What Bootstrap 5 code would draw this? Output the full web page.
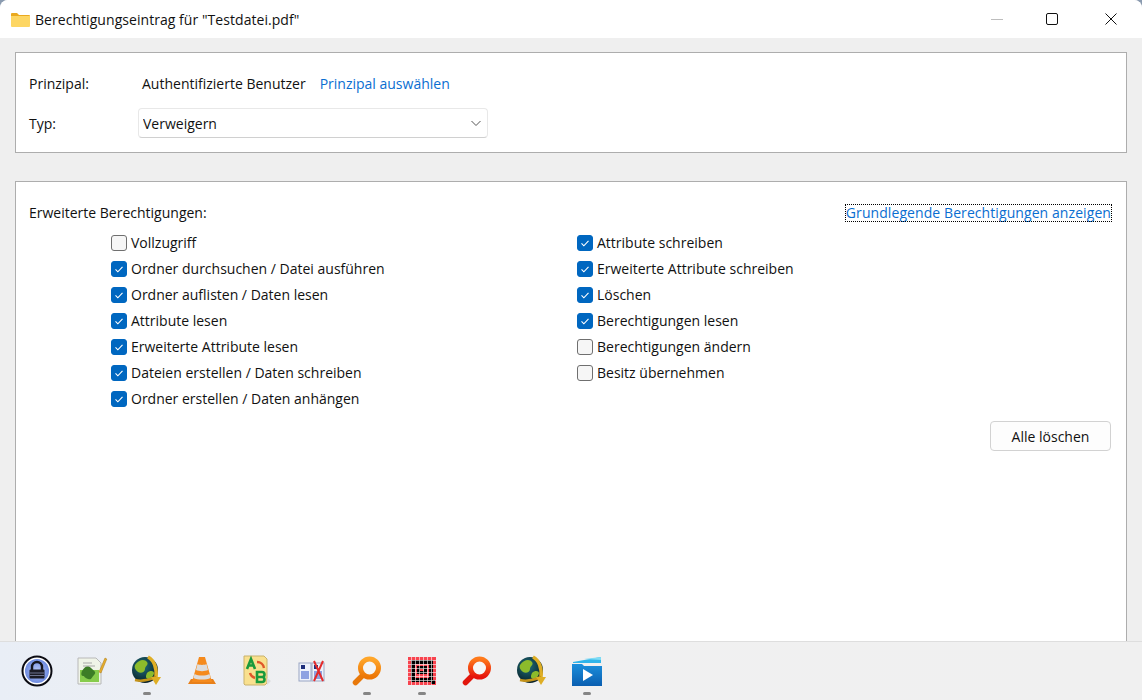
<!DOCTYPE html>
<html lang="de">
<head>
    <meta charset="UTF-8">
    <title>Berechtigungseintrag</title>
    <link rel="stylesheet" href="https://cdn.jsdelivr.net/npm/bootstrap@5.3.3/dist/css/bootstrap.min.css">
    <style>
        html, body { height: 700px; overflow: hidden; }
        body { background: #8a9bb0; font-family: "Open Sans", "Liberation Sans", sans-serif; font-size: 14px; color: #111; }
        .app-window { height: 641px; background: #efefef; border-radius: 8px 8px 0 0; overflow: hidden; }
        .title-bar { height: 38px; background: #fff; padding-left: 11px; }
        .title-text { margin-left: 5px; font-size: 14px; letter-spacing: .05px; }
        .win-btn { width: 55px; height: 38px; }
        .win-btn-last { width: 63px; }
        .dlg-panel { background: #fff; border: 1px solid #adadad; margin: 0 15px; }
        .panel-top { height: 101px; margin-top: 14px; padding: 20px 14px 0 13px; }
        .panel-main { flex: 1 1 auto; margin-top: 28px; margin-bottom: -2px; padding: 20px 14px 0 13px; }
        .lbl-col { width: 109px; }
        .form-row-a { height: 20px; }
        .form-row-b { margin-top: 15px; height: 30px; }
        .sys-link { color: #0a6ed1; text-decoration: none; }
        .pick-link { margin-left: 14px; }
        .type-select {
            --bs-form-select-bg-img: url("data:image/svg+xml,%3csvg xmlns='http://www.w3.org/2000/svg' viewBox='0 0 12 12'%3e%3cpath fill='none' stroke='%23555' d='M1.500 4l4.500 4.500L10.500 4'/%3e%3c/svg%3e");
            width: 350px; height: 30px; padding: 0 30px 0 4px; font-size: 14px; color: #111;
            border: 1px solid #e8e8e8; border-bottom-color: #d0d0d0; border-radius: 4px;
            background-position: right 5px center; background-size: 12px 12px;
        }
        .focus-link { outline: 1px dotted #000; line-height: 16px; letter-spacing: .08px; margin-right: 1px; }
        .perm-cols { padding-left: 82px; margin-top: 7px; }
        .perm-col { width: 466px; }
        .perm-item { height: 26px; margin: 0; padding: 0; display: flex; align-items: center; }
        .perm-item .form-check-input { width: 16px; height: 16px; margin: 0 4px 0 0; float: none; border: 1px solid #6f6f6f; border-radius: 3px; background-color: #f6f6f6; flex: none; }
        .perm-item .form-check-input:checked[type=checkbox] {
            --bs-form-check-bg-image: url("data:image/svg+xml,%3csvg xmlns='http://www.w3.org/2000/svg' viewBox='0 0 16 16'%3e%3cpath fill='none' stroke='%23fff' stroke-width='1.300' d='M4 8.500l2.700 2.700L12 5.500'/%3e%3c/svg%3e");
            background-color: #0067c0; border-color: #0067c0;
        }
        .perm-item .form-check-label { line-height: 20px; }
        .clear-btn { width: 121px; height: 30px; padding: 0; font-size: 14px; color: #111; background: #fdfdfd; border: 1px solid #d2d2d2; border-radius: 4px; margin-right: 1px; margin-top: 1px; }
        .task-bar { height: 59px; background: linear-gradient(90deg, #e9eef6, #f0f0f1 30%, #f0f0f0); border-top: 1px solid #dedede; padding-left: 9px; }
        .task-slot { width: 55px; height: 58px; padding-top: 13px; }
        .task-slot svg { display: block; }
        .run-dot { width: 8px; height: 3px; border-radius: 2px; background: #858585; margin-top: 5px; }
        .run-none { background: transparent; }
    </style>
</head>
<body>
    <!-- Dialogfenster -->
    <div class="app-window d-flex flex-column">
        <div class="title-bar d-flex align-items-center flex-shrink-0">
            <svg width="19" height="15" viewBox="0 0 19 15"><path d="M0 2a1 1 0 0 1 1-1h5l2 2h10a1 1 0 0 1 1 1v1H0z" fill="#eaa91f"/><path d="M0 4h19v10a1 1 0 0 1-1 1H1a1 1 0 0 1-1-1z" fill="#fdd663"/></svg>
            <span class="title-text flex-grow-1">Berechtigungseintrag für "Testdatei.pdf"</span>
            <div class="win-btn d-flex align-items-center justify-content-center"><svg width="12" height="12"><path d="M0 6.500h12" stroke="#bdbdbd"/></svg></div>
            <div class="win-btn d-flex align-items-center justify-content-center"><svg width="12" height="12"><rect x=".5" y=".5" width="11" height="11" rx="1.500" fill="none" stroke="#111"/></svg></div>
            <div class="win-btn win-btn-last d-flex align-items-center justify-content-center"><svg width="12" height="12"><path d="M.5.5l11 11M11.500.5l-11 11" stroke="#111"/></svg></div>
        </div>

        <div class="dlg-panel panel-top flex-shrink-0">
            <div class="form-row-a d-flex align-items-center">
                <span class="lbl-col flex-shrink-0">Prinzipal:</span>
                <span class="ms-1">Authentifizierte Benutzer</span>
                <a href="#" class="sys-link pick-link">Prinzipal auswählen</a>
            </div>
            <div class="form-row-b d-flex align-items-center">
                <span class="lbl-col flex-shrink-0">Typ:</span>
                <select class="form-select type-select">
                    <option>Verweigern</option>
                </select>
            </div>
        </div>

        <div class="dlg-panel panel-main">
            <div class="d-flex justify-content-between align-items-center">
                <span>Erweiterte Berechtigungen:</span>
                <a href="#" class="sys-link focus-link">Grundlegende Berechtigungen anzeigen</a>
            </div>
            <div class="perm-cols d-flex">
                <div class="perm-col">
                    <div class="form-check perm-item"><input class="form-check-input" type="checkbox" id="p1"><label class="form-check-label" for="p1">Vollzugriff</label></div>
                    <div class="form-check perm-item"><input class="form-check-input" type="checkbox" id="p2" checked><label class="form-check-label" for="p2">Ordner durchsuchen / Datei ausführen</label></div>
                    <div class="form-check perm-item"><input class="form-check-input" type="checkbox" id="p3" checked><label class="form-check-label" for="p3">Ordner auflisten / Daten lesen</label></div>
                    <div class="form-check perm-item"><input class="form-check-input" type="checkbox" id="p4" checked><label class="form-check-label" for="p4">Attribute lesen</label></div>
                    <div class="form-check perm-item"><input class="form-check-input" type="checkbox" id="p5" checked><label class="form-check-label" for="p5">Erweiterte Attribute lesen</label></div>
                    <div class="form-check perm-item"><input class="form-check-input" type="checkbox" id="p6" checked><label class="form-check-label" for="p6">Dateien erstellen / Daten schreiben</label></div>
                    <div class="form-check perm-item"><input class="form-check-input" type="checkbox" id="p7" checked><label class="form-check-label" for="p7">Ordner erstellen / Daten anhängen</label></div>
                </div>
                <div class="perm-col">
                    <div class="form-check perm-item"><input class="form-check-input" type="checkbox" id="p8" checked><label class="form-check-label" for="p8">Attribute schreiben</label></div>
                    <div class="form-check perm-item"><input class="form-check-input" type="checkbox" id="p9" checked><label class="form-check-label" for="p9">Erweiterte Attribute schreiben</label></div>
                    <div class="form-check perm-item"><input class="form-check-input" type="checkbox" id="p10" checked><label class="form-check-label" for="p10">Löschen</label></div>
                    <div class="form-check perm-item"><input class="form-check-input" type="checkbox" id="p11" checked><label class="form-check-label" for="p11">Berechtigungen lesen</label></div>
                    <div class="form-check perm-item"><input class="form-check-input" type="checkbox" id="p12"><label class="form-check-label" for="p12">Berechtigungen ändern</label></div>
                    <div class="form-check perm-item"><input class="form-check-input" type="checkbox" id="p13"><label class="form-check-label" for="p13">Besitz übernehmen</label></div>
                </div>
            </div>
            <div class="d-flex justify-content-end mt-2">
                <button type="button" class="btn clear-btn">Alle löschen</button>
            </div>
        </div>
    </div>

    <!-- Taskleiste -->
    <div class="task-bar d-flex">
        <!-- Verläufe für die Symbole -->
        <svg width="0" height="0" class="position-absolute">
            <defs>
                <radialGradient id="gradLock" cx=".5" cy=".5" r=".6"><stop offset="0" stop-color="#b8c8f5"/><stop offset="1" stop-color="#5f7fdc"/></radialGradient>
                <radialGradient id="gradGlobe" cx=".4" cy=".35" r=".7"><stop offset="0" stop-color="#1f6f7c"/><stop offset="1" stop-color="#061a22"/></radialGradient>
                <linearGradient id="gradOrange" x1="0" y1="0" x2="0" y2="1"><stop offset="0" stop-color="#ffa62a"/><stop offset="1" stop-color="#ec7606"/></linearGradient>
                <linearGradient id="gradRed" x1="0" y1="0" x2="0" y2="1"><stop offset="0" stop-color="#ff7a1a"/><stop offset="1" stop-color="#e6140c"/></linearGradient>
                <linearGradient id="gradFolder" x1="0" y1="0" x2="0" y2="1"><stop offset="0" stop-color="#1b8fdc"/><stop offset="1" stop-color="#0a5eb0"/></linearGradient>
            </defs>
        </svg>
        <div class="task-slot d-flex flex-column align-items-center">
            <svg width="32" height="32" viewBox="0 0 32 32"><circle cx="16" cy="16" r="14.500" fill="#fff" stroke="#0b0b12" stroke-width="2"/><circle cx="16" cy="16" r="12" fill="url(#gradLock)"/><path d="M11 15v-3a5 5 0 0 1 10 0v3" fill="none" stroke="#16161e" stroke-width="2.400"/><rect x="8.500" y="14.500" width="15" height="9" rx="1" fill="#1b1b25"/><path d="M9 18h14M9 20.500h14" stroke="#6c7390"/></svg>
            <span class="run-dot run-none"></span>
        </div>
        <div class="task-slot d-flex flex-column align-items-center">
            <svg width="32" height="32" viewBox="0 0 32 32"><path d="M2 3h18l5 5v21H2z" fill="#f0f4e8" stroke="#b8b8b8"/><path d="M4 15h19v12H4z" fill="#86cc4c"/><path d="M6 16c3-5 6-6 9-3s6 4 3 7-2 5-6 4-3-3-5-3-2-3-1-5z" fill="#3c7d26"/><path d="M7 8h9M7 11h12" stroke="#a8a8a8"/><path d="M23 17 29 3l1.800 1L25 18z" fill="#e6ad2c" stroke="#a87612" stroke-width=".5"/></svg>
            <span class="run-dot run-none"></span>
        </div>
        <div class="task-slot d-flex flex-column align-items-center">
            <svg width="32" height="32" viewBox="0 0 32 32"><circle cx="14" cy="15" r="13" fill="url(#gradGlobe)"/><path d="M4 10c4-6 10-6 12-3s-2 4-2 7-4 5-7 3-4-5-3-7zM16 18c3-3 7-2 7 0s-3 7-6 6-2-4-1-6z" fill="#8cbb2b"/><path d="M17 2c6 3 9 11 8 20" fill="none" stroke="#dfae25" stroke-width="3.500"/><path d="M4 25c8 2 14 0 21-3" fill="none" stroke="#c4931a" stroke-width="2.500"/><path d="M20 22h10l-5 8z" fill="#dfae25"/></svg>
            <span class="run-dot"></span>
        </div>
        <div class="task-slot d-flex flex-column align-items-center">
            <svg width="32" height="32" viewBox="0 0 32 32"><path d="M5 24h22l3 5H2z" fill="#e8801a"/><path d="M13 2h6l7 25H6z" fill="#f58a1c"/><path d="M11.500 9c2 1.200 7 1.200 9 0l1.500 6c-3 1.500-9 1.500-12 0zM8.500 19c4 2 11 2 15 0l1 4c-4 2-13 2-17 0z" fill="#ddd"/></svg>
            <span class="run-dot run-none"></span>
        </div>
        <div class="task-slot d-flex flex-column align-items-center">
            <svg width="32" height="32" viewBox="0 0 32 32"><path d="M3 1h20l3 3v24l-2 2H4l-1-1z" fill="#f9e08e" stroke="#c9b26d"/><path d="M26 23l4 3-4 4z" fill="#ddd"/><path d="M6 14 10 4l4 10M7.500 10.500h5" fill="none" stroke="#1b9a3c" stroke-width="2.600"/><path d="M16 17h5a2.500 2.500 0 0 1 0 5h-5zM16 22h5a2.500 2.500 0 0 1 0 5h-5z" fill="none" stroke="#1b9a3c" stroke-width="2.600"/><path d="M16 7a7 7 0 0 1 7 6M9 18a7 7 0 0 0 5 5" fill="none" stroke="#e0562a" stroke-width="2.400"/></svg>
            <span class="run-dot run-none"></span>
        </div>
        <div class="task-slot d-flex flex-column align-items-center">
            <svg width="32" height="32" viewBox="0 0 32 32"><rect x="3" y="8" width="12" height="18" fill="#eef2fb" stroke="#9aa6c4"/><rect x="16" y="8" width="12" height="18" fill="#eef2fb" stroke="#9aa6c4"/><path d="M5 10h4v4H5zM18 10h4v4h-4z" fill="#1d2e7c"/><path d="M5 17h8M5 19h8M5 21h8M5 23h8M18 17h8M18 19h8M18 21h8M18 23h8" stroke="#2f53c8"/><path d="M18 6l9 20M27 6l-9 20" stroke="#e32b2b" stroke-width="2"/></svg>
            <span class="run-dot run-none"></span>
        </div>
        <div class="task-slot d-flex flex-column align-items-center">
            <svg width="32" height="32" viewBox="0 0 32 32"><path d="M12 20 4.500 27.500" stroke="#e8780a" stroke-width="5.500" stroke-linecap="round"/><circle cx="18.500" cy="13" r="9" fill="#f4f4f4" stroke="url(#gradOrange)" stroke-width="5"/></svg>
            <span class="run-dot"></span>
        </div>
        <div class="task-slot d-flex flex-column align-items-center">
            <svg width="32" height="32" viewBox="0 0 32 32"><rect x="2" y="2" width="28" height="28" fill="#f8434e"/><path d="M7 7h18v18H7z" fill="none" stroke="#000" stroke-width="4"/><path d="M12.500 12.500h7v5h-7z" fill="none" stroke="#000" stroke-width="3"/><rect x="25" y="25" width="4" height="4" fill="#000"/><path d="M2 5.500h28M2 9.500h28M2 13.500h28M2 17.500h28M2 21.500h28M2 25.500h28M5.500 2v28M9.500 2v28M13.500 2v28M17.500 2v28M21.500 2v28M25.500 2v28" stroke="#fff" stroke-width=".7" opacity=".85"/></svg>
            <span class="run-dot"></span>
        </div>
        <div class="task-slot d-flex flex-column align-items-center">
            <svg width="32" height="32" viewBox="0 0 32 32"><path d="M12 20 4.500 27.500" stroke="#e2160c" stroke-width="5.500" stroke-linecap="round"/><circle cx="18.500" cy="13" r="9" fill="#f6f6f6" stroke="url(#gradRed)" stroke-width="5"/></svg>
            <span class="run-dot run-none"></span>
        </div>
        <div class="task-slot d-flex flex-column align-items-center">
            <svg width="32" height="32" viewBox="0 0 32 32"><circle cx="14" cy="15" r="13" fill="url(#gradGlobe)"/><path d="M4 10c4-6 10-6 12-3s-2 4-2 7-4 5-7 3-4-5-3-7zM16 18c3-3 7-2 7 0s-3 7-6 6-2-4-1-6z" fill="#8cbb2b"/><path d="M17 2c6 3 9 11 8 20" fill="none" stroke="#dfae25" stroke-width="3.500"/><path d="M4 25c8 2 14 0 21-3" fill="none" stroke="#c4931a" stroke-width="2.500"/><path d="M20 22h10l-5 8z" fill="#dfae25"/></svg>
            <span class="run-dot run-none"></span>
        </div>
        <div class="task-slot d-flex flex-column align-items-center">
            <svg width="32" height="32" viewBox="0 0 32 32"><path d="M2 7 30 2v6H2z" fill="#2fb4ea"/><path d="M13 4 30 2v3z" fill="#7fdcf5"/><path d="M1 9h10l2 2h18v20H1z" fill="url(#gradFolder)"/><path d="M12 14v12l10-6z" fill="#fff"/></svg>
            <span class="run-dot"></span>
        </div>
    </div>
</body>
</html>
